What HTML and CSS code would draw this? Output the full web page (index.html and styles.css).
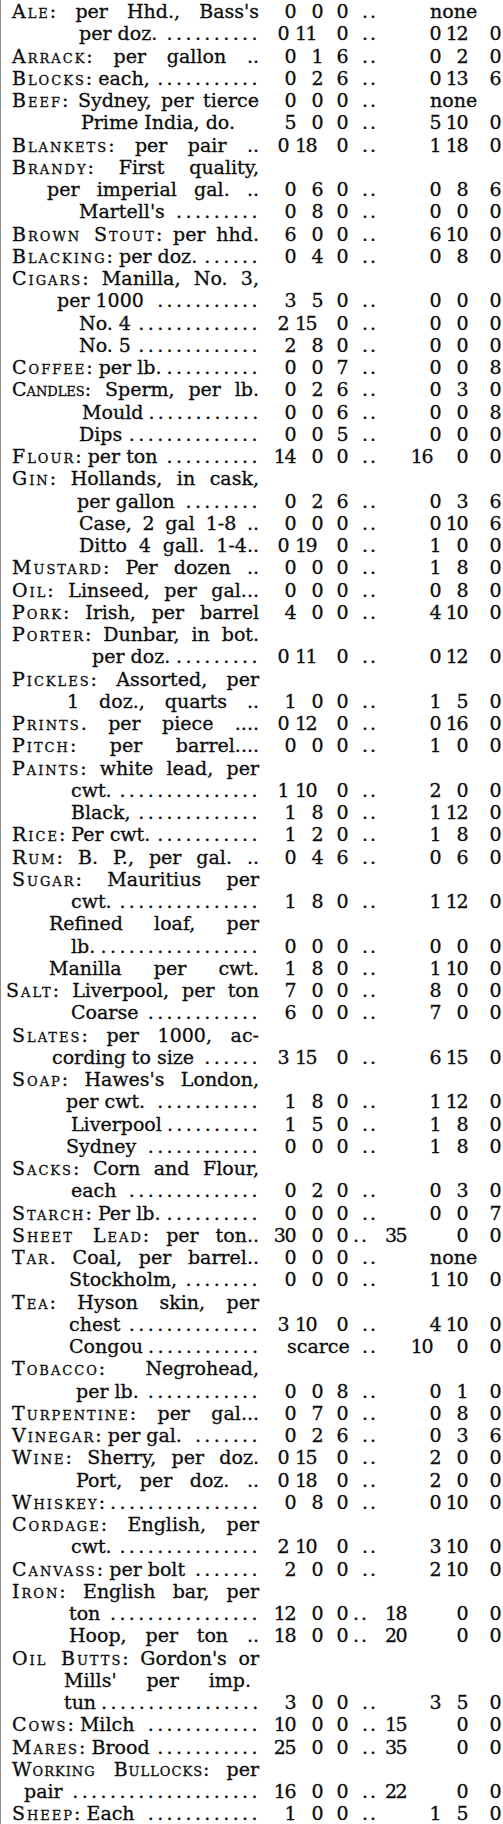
FILE: index.html
```html
<!DOCTYPE html>
<html lang="en">
<head>
<meta charset="utf-8">
<title>Prices Current</title>
<link rel="stylesheet" href="styles.css">
</head>
<body>
<div class="page">
<div class="r"><div class="d j"><span class="h">Ale</span>: per Hhd., Bass's</div><span class="lp">0</span><span class="ls">0</span><span class="ld">0</span><span class="dd">..</span><span class="no">none</span></div>
<div class="r w"><div class="d l i80"><span class="t">per doz.</span><span class="ldr">................................</span></div><span class="lp">0</span><span class="ls">11</span><span class="ld">0</span><span class="dd">..</span><span class="rp">0</span><span class="rs">12</span><span class="rd">0</span></div>
<div class="r"><div class="d j"><span class="h">Arrack</span>: per gallon ..</div><span class="lp">0</span><span class="ls">1</span><span class="ld">6</span><span class="dd">..</span><span class="rp">0</span><span class="rs">2</span><span class="rd">0</span></div>
<div class="r"><div class="d l"><span class="t"><span class="h">Blocks</span>: each,</span><span class="ldr">................................</span></div><span class="lp">0</span><span class="ls">2</span><span class="ld">6</span><span class="dd">..</span><span class="rp">0</span><span class="rs">13</span><span class="rd">6</span></div>
<div class="r"><div class="d j"><span class="h">Beef</span>: Sydney, per tierce</div><span class="lp">0</span><span class="ls">0</span><span class="ld">0</span><span class="dd">..</span><span class="no">none</span></div>
<div class="r"><div class="d i82">Prime India, do.</div><span class="lp">5</span><span class="ls">0</span><span class="ld">0</span><span class="dd">..</span><span class="rp">5</span><span class="rs">10</span><span class="rd">0</span></div>
<div class="r w"><div class="d j"><span class="h">Blankets</span>: per pair ..</div><span class="lp">0</span><span class="ls">18</span><span class="ld">0</span><span class="dd">..</span><span class="rp">1</span><span class="rs">18</span><span class="rd">0</span></div>
<div class="r"><div class="d j"><span class="h">Brandy</span>: First quality,</div></div>
<div class="r"><div class="d j i48">per imperial gal. ..</div><span class="lp">0</span><span class="ls">6</span><span class="ld">0</span><span class="dd">..</span><span class="rp">0</span><span class="rs">8</span><span class="rd">6</span></div>
<div class="r"><div class="d l i80"><span class="t">Martell's</span><span class="ldr">................................</span></div><span class="lp">0</span><span class="ls">8</span><span class="ld">0</span><span class="dd">..</span><span class="rp">0</span><span class="rs">0</span><span class="rd">0</span></div>
<div class="r"><div class="d j"><span class="h">Brown Stout</span>: per hhd.</div><span class="lp">6</span><span class="ls">0</span><span class="ld">0</span><span class="dd">..</span><span class="rp">6</span><span class="rs">10</span><span class="rd">0</span></div>
<div class="r"><div class="d l"><span class="t"><span class="h">Blacking</span>: per doz.</span><span class="ldr">................................</span></div><span class="lp">0</span><span class="ls">4</span><span class="ld">0</span><span class="dd">..</span><span class="rp">0</span><span class="rs">8</span><span class="rd">0</span></div>
<div class="r"><div class="d j"><span class="h">Cigars</span>: Manilla, No. 3,</div></div>
<div class="r"><div class="d l i58"><span class="t">per 1000</span><span class="ldr">................................</span></div><span class="lp">3</span><span class="ls">5</span><span class="ld">0</span><span class="dd">..</span><span class="rp">0</span><span class="rs">0</span><span class="rd">0</span></div>
<div class="r w"><div class="d l i80"><span class="t">No. 4</span><span class="ldr">................................</span></div><span class="lp">2</span><span class="ls">15</span><span class="ld">0</span><span class="dd">..</span><span class="rp">0</span><span class="rs">0</span><span class="rd">0</span></div>
<div class="r"><div class="d l i80"><span class="t">No. 5</span><span class="ldr">................................</span></div><span class="lp">2</span><span class="ls">8</span><span class="ld">0</span><span class="dd">..</span><span class="rp">0</span><span class="rs">0</span><span class="rd">0</span></div>
<div class="r"><div class="d l"><span class="t"><span class="h">Coffee</span>: per lb.</span><span class="ldr">................................</span></div><span class="lp">0</span><span class="ls">0</span><span class="ld">7</span><span class="dd">..</span><span class="rp">0</span><span class="rs">0</span><span class="rd">8</span></div>
<div class="r"><div class="d j t0"><span class="h">Candles</span>: Sperm, per lb.</div><span class="lp">0</span><span class="ls">2</span><span class="ld">6</span><span class="dd">..</span><span class="rp">0</span><span class="rs">3</span><span class="rd">0</span></div>
<div class="r"><div class="d l i83"><span class="t">Mould</span><span class="ldr">................................</span></div><span class="lp">0</span><span class="ls">0</span><span class="ld">6</span><span class="dd">..</span><span class="rp">0</span><span class="rs">0</span><span class="rd">8</span></div>
<div class="r"><div class="d l i80"><span class="t">Dips</span><span class="ldr">................................</span></div><span class="lp">0</span><span class="ls">0</span><span class="ld">5</span><span class="dd">..</span><span class="rp">0</span><span class="rs">0</span><span class="rd">0</span></div>
<div class="r r2"><div class="d l"><span class="t"><span class="h">Flour</span>: per ton</span><span class="ldr">................................</span></div><span class="lp">14</span><span class="ls">0</span><span class="ld">0</span><span class="dd">..</span><span class="rp">16</span><span class="rs">0</span><span class="rd">0</span></div>
<div class="r"><div class="d j"><span class="h">Gin</span>: Hollands, in cask,</div></div>
<div class="r"><div class="d l i78"><span class="t">per gallon</span><span class="ldr">................................</span></div><span class="lp">0</span><span class="ls">2</span><span class="ld">6</span><span class="dd">..</span><span class="rp">0</span><span class="rs">3</span><span class="rd">6</span></div>
<div class="r"><div class="d j i80">Case, 2 gal 1-8 ..</div><span class="lp">0</span><span class="ls">0</span><span class="ld">0</span><span class="dd">..</span><span class="rp">0</span><span class="rs">10</span><span class="rd">6</span></div>
<div class="r w"><div class="d j i80">Ditto 4 gall. 1-4..</div><span class="lp">0</span><span class="ls">19</span><span class="ld">0</span><span class="dd">..</span><span class="rp">1</span><span class="rs">0</span><span class="rd">0</span></div>
<div class="r"><div class="d j"><span class="h">Mustard</span>: Per dozen ..</div><span class="lp">0</span><span class="ls">0</span><span class="ld">0</span><span class="dd">..</span><span class="rp">1</span><span class="rs">8</span><span class="rd">0</span></div>
<div class="r"><div class="d j"><span class="h">Oil</span>: Linseed, per gal...</div><span class="lp">0</span><span class="ls">0</span><span class="ld">0</span><span class="dd">..</span><span class="rp">0</span><span class="rs">8</span><span class="rd">0</span></div>
<div class="r"><div class="d j"><span class="h">Pork</span>: Irish, per barrel</div><span class="lp">4</span><span class="ls">0</span><span class="ld">0</span><span class="dd">..</span><span class="rp">4</span><span class="rs">10</span><span class="rd">0</span></div>
<div class="r"><div class="d j"><span class="h">Porter</span>: Dunbar, in bot.</div></div>
<div class="r w"><div class="d l i93"><span class="t">per doz.</span><span class="ldr">................................</span></div><span class="lp">0</span><span class="ls">11</span><span class="ld">0</span><span class="dd">..</span><span class="rp">0</span><span class="rs">12</span><span class="rd">0</span></div>
<div class="r"><div class="d j"><span class="h">Pickles</span>: Assorted, per</div></div>
<div class="r"><div class="d j i68">1 doz., quarts ..</div><span class="lp">1</span><span class="ls">0</span><span class="ld">0</span><span class="dd">..</span><span class="rp">1</span><span class="rs">5</span><span class="rd">0</span></div>
<div class="r w"><div class="d j"><span class="h">Prints</span>. per piece ....</div><span class="lp">0</span><span class="ls">12</span><span class="ld">0</span><span class="dd">..</span><span class="rp">0</span><span class="rs">16</span><span class="rd">0</span></div>
<div class="r"><div class="d j"><span class="h">Pitch</span>: per barrel....</div><span class="lp">0</span><span class="ls">0</span><span class="ld">0</span><span class="dd">..</span><span class="rp">1</span><span class="rs">0</span><span class="rd">0</span></div>
<div class="r"><div class="d j"><span class="h">Paints</span>: white lead, per</div></div>
<div class="r w"><div class="d l i72"><span class="t">cwt.</span><span class="ldr">................................</span></div><span class="lp">1</span><span class="ls">10</span><span class="ld">0</span><span class="dd">..</span><span class="rp">2</span><span class="rs">0</span><span class="rd">0</span></div>
<div class="r"><div class="d l i72"><span class="t">Black,</span><span class="ldr">................................</span></div><span class="lp">1</span><span class="ls">8</span><span class="ld">0</span><span class="dd">..</span><span class="rp">1</span><span class="rs">12</span><span class="rd">0</span></div>
<div class="r"><div class="d l"><span class="t"><span class="h">Rice</span>: Per cwt.</span><span class="ldr">................................</span></div><span class="lp">1</span><span class="ls">2</span><span class="ld">0</span><span class="dd">..</span><span class="rp">1</span><span class="rs">8</span><span class="rd">0</span></div>
<div class="r"><div class="d j"><span class="h">Rum</span>: B. P., per gal. ..</div><span class="lp">0</span><span class="ls">4</span><span class="ld">6</span><span class="dd">..</span><span class="rp">0</span><span class="rs">6</span><span class="rd">0</span></div>
<div class="r"><div class="d j"><span class="h">Sugar</span>: Mauritius per</div></div>
<div class="r"><div class="d l i72"><span class="t">cwt.</span><span class="ldr">................................</span></div><span class="lp">1</span><span class="ls">8</span><span class="ld">0</span><span class="dd">..</span><span class="rp">1</span><span class="rs">12</span><span class="rd">0</span></div>
<div class="r"><div class="d j i50">Refined loaf, per</div></div>
<div class="r"><div class="d l i72"><span class="t">lb.</span><span class="ldr">................................</span></div><span class="lp">0</span><span class="ls">0</span><span class="ld">0</span><span class="dd">..</span><span class="rp">0</span><span class="rs">0</span><span class="rd">0</span></div>
<div class="r"><div class="d j i50">Manilla per cwt.</div><span class="lp">1</span><span class="ls">8</span><span class="ld">0</span><span class="dd">..</span><span class="rp">1</span><span class="rs">10</span><span class="rd">0</span></div>
<div class="r"><div class="d j i7"><span class="h">Salt</span>: Liverpool, per ton</div><span class="lp">7</span><span class="ls">0</span><span class="ld">0</span><span class="dd">..</span><span class="rp">8</span><span class="rs">0</span><span class="rd">0</span></div>
<div class="r"><div class="d l i72"><span class="t">Coarse</span><span class="ldr">................................</span></div><span class="lp">6</span><span class="ls">0</span><span class="ld">0</span><span class="dd">..</span><span class="rp">7</span><span class="rs">0</span><span class="rd">0</span></div>
<div class="r"><div class="d j"><span class="h">Slates</span>: per 1000, ac-</div></div>
<div class="r w"><div class="d l i53"><span class="t">cording to size</span><span class="ldr">................................</span></div><span class="lp">3</span><span class="ls">15</span><span class="ld">0</span><span class="dd">..</span><span class="rp">6</span><span class="rs">15</span><span class="rd">0</span></div>
<div class="r"><div class="d j"><span class="h">Soap</span>: Hawes's London,</div></div>
<div class="r"><div class="d l i67"><span class="t">per cwt.</span><span class="ldr">................................</span></div><span class="lp">1</span><span class="ls">8</span><span class="ld">0</span><span class="dd">..</span><span class="rp">1</span><span class="rs">12</span><span class="rd">0</span></div>
<div class="r"><div class="d l i72"><span class="t">Liverpool</span><span class="ldr">................................</span></div><span class="lp">1</span><span class="ls">5</span><span class="ld">0</span><span class="dd">..</span><span class="rp">1</span><span class="rs">8</span><span class="rd">0</span></div>
<div class="r"><div class="d l i67"><span class="t">Sydney</span><span class="ldr">................................</span></div><span class="lp">0</span><span class="ls">0</span><span class="ld">0</span><span class="dd">..</span><span class="rp">1</span><span class="rs">8</span><span class="rd">0</span></div>
<div class="r"><div class="d j"><span class="h">Sacks</span>: Corn and Flour,</div></div>
<div class="r"><div class="d l i72"><span class="t">each</span><span class="ldr">................................</span></div><span class="lp">0</span><span class="ls">2</span><span class="ld">0</span><span class="dd">..</span><span class="rp">0</span><span class="rs">3</span><span class="rd">0</span></div>
<div class="r"><div class="d l"><span class="t"><span class="h">Starch</span>: Per lb.</span><span class="ldr">................................</span></div><span class="lp">0</span><span class="ls">0</span><span class="ld">0</span><span class="dd">..</span><span class="rp">0</span><span class="rs">0</span><span class="rd">7</span></div>
<div class="r n1"><div class="d j"><span class="h">Sheet Lead</span>: per ton..</div><span class="lp">30</span><span class="ls">0</span><span class="ld">0</span><span class="dd">..</span><span class="rp">35</span><span class="rs">0</span><span class="rd">0</span></div>
<div class="r"><div class="d j"><span class="h">Tar</span>. Coal, per barrel..</div><span class="lp">0</span><span class="ls">0</span><span class="ld">0</span><span class="dd">..</span><span class="no">none</span></div>
<div class="r"><div class="d l i70"><span class="t">Stockholm,</span><span class="ldr">................................</span></div><span class="lp">0</span><span class="ls">0</span><span class="ld">0</span><span class="dd">..</span><span class="rp">1</span><span class="rs">10</span><span class="rd">0</span></div>
<div class="r"><div class="d j"><span class="h">Tea</span>: Hyson skin, per</div></div>
<div class="r w"><div class="d l i70"><span class="t">chest</span><span class="ldr">................................</span></div><span class="lp">3</span><span class="ls">10</span><span class="ld">0</span><span class="dd">..</span><span class="rp">4</span><span class="rs">10</span><span class="rd">0</span></div>
<div class="r r2"><div class="d l i70"><span class="t">Congou</span><span class="ldr">................................</span></div><span class="sca">scarce</span><span class="dd">..</span><span class="rp">10</span><span class="rs">0</span><span class="rd">0</span></div>
<div class="r"><div class="d j"><span class="h">Tobacco</span>: Negrohead,</div></div>
<div class="r"><div class="d l i77"><span class="t">per lb.</span><span class="ldr">................................</span></div><span class="lp">0</span><span class="ls">0</span><span class="ld">8</span><span class="dd">..</span><span class="rp">0</span><span class="rs">1</span><span class="rd">0</span></div>
<div class="r"><div class="d j"><span class="h">Turpentine</span>: per gal...</div><span class="lp">0</span><span class="ls">7</span><span class="ld">0</span><span class="dd">..</span><span class="rp">0</span><span class="rs">8</span><span class="rd">0</span></div>
<div class="r"><div class="d l"><span class="t"><span class="h">Vinegar</span>: per gal.</span><span class="ldr">................................</span></div><span class="lp">0</span><span class="ls">2</span><span class="ld">6</span><span class="dd">..</span><span class="rp">0</span><span class="rs">3</span><span class="rd">6</span></div>
<div class="r w"><div class="d j"><span class="h">Wine</span>: Sherry, per doz.</div><span class="lp">0</span><span class="ls">15</span><span class="ld">0</span><span class="dd">..</span><span class="rp">2</span><span class="rs">0</span><span class="rd">0</span></div>
<div class="r w"><div class="d j i77">Port, per doz. ..</div><span class="lp">0</span><span class="ls">18</span><span class="ld">0</span><span class="dd">..</span><span class="rp">2</span><span class="rs">0</span><span class="rd">0</span></div>
<div class="r"><div class="d l"><span class="t"><span class="h">Whiskey</span>:</span><span class="ldr">................................</span></div><span class="lp">0</span><span class="ls">8</span><span class="ld">0</span><span class="dd">..</span><span class="rp">0</span><span class="rs">10</span><span class="rd">0</span></div>
<div class="r"><div class="d j"><span class="h">Cordage</span>: English, per</div></div>
<div class="r w"><div class="d l i72"><span class="t">cwt.</span><span class="ldr">................................</span></div><span class="lp">2</span><span class="ls">10</span><span class="ld">0</span><span class="dd">..</span><span class="rp">3</span><span class="rs">10</span><span class="rd">0</span></div>
<div class="r"><div class="d l"><span class="t"><span class="h">Canvass</span>: per bolt</span><span class="ldr">................................</span></div><span class="lp">2</span><span class="ls">0</span><span class="ld">0</span><span class="dd">..</span><span class="rp">2</span><span class="rs">10</span><span class="rd">0</span></div>
<div class="r"><div class="d j"><span class="h">Iron</span>: English bar, per</div></div>
<div class="r n1"><div class="d l i70"><span class="t">ton</span><span class="ldr">................................</span></div><span class="lp">12</span><span class="ls">0</span><span class="ld">0</span><span class="dd">..</span><span class="rp">18</span><span class="rs">0</span><span class="rd">0</span></div>
<div class="r n1"><div class="d j i70">Hoop, per ton ..</div><span class="lp">18</span><span class="ls">0</span><span class="ld">0</span><span class="dd">..</span><span class="rp">20</span><span class="rs">0</span><span class="rd">0</span></div>
<div class="r"><div class="d j"><span class="h">Oil Butts</span>: Gordon's or</div></div>
<div class="r"><div class="d j i65 pr">Mills' per imp.</div></div>
<div class="r"><div class="d l i65"><span class="t">tun</span><span class="ldr">................................</span></div><span class="lp">3</span><span class="ls">0</span><span class="ld">0</span><span class="dd">..</span><span class="rp">3</span><span class="rs">5</span><span class="rd">0</span></div>
<div class="r n2"><div class="d l"><span class="t"><span class="h">Cows</span>: Milch</span><span class="ldr">................................</span></div><span class="lp">10</span><span class="ls">0</span><span class="ld">0</span><span class="dd">..</span><span class="rp">15</span><span class="rs">0</span><span class="rd">0</span></div>
<div class="r n2"><div class="d l"><span class="t"><span class="h">Mares</span>: Brood</span><span class="ldr">................................</span></div><span class="lp">25</span><span class="ls">0</span><span class="ld">0</span><span class="dd">..</span><span class="rp">35</span><span class="rs">0</span><span class="rd">0</span></div>
<div class="r"><div class="d j t1"><span class="h">Working Bullocks</span>: per</div></div>
<div class="r n2"><div class="d l i25"><span class="t">pair</span><span class="ldr">................................</span></div><span class="lp">16</span><span class="ls">0</span><span class="ld">0</span><span class="dd">..</span><span class="rp">22</span><span class="rs">0</span><span class="rd">0</span></div>
<div class="r"><div class="d l"><span class="t"><span class="h">Sheep</span>: Each</span><span class="ldr">................................</span></div><span class="lp">1</span><span class="ls">0</span><span class="ld">0</span><span class="dd">..</span><span class="rp">1</span><span class="rs">5</span><span class="rd">0</span></div>
</div>
<script src="script.js"></script>
</body>
</html>
```
FILE: styles.css
```css
html, body {
  margin: 0;
  padding: 0;
  background: #ffffff;
}

body {
  font-family: "DejaVu Serif", serif;
  font-size: 19px;
  line-height: 22.25px;
  color: #0c0c0c;
  -webkit-text-stroke: 0.3px #0c0c0c;
}

.page {
  width: 503px;
  box-shadow: inset 1px 0 0 #8c8c8c;
}

.r {
  display: grid;
  grid-template-columns: 259px 36px 27px 25px 38px 55px 27px 33px;
  height: 22.25px;
}

.d {
  grid-column: 1;
  padding-left: 12px;
  min-width: 0;
}

.j {
  text-align: justify;
  text-align-last: justify;
}

.pr {
  padding-right: 8px;
}

.l {
  display: flex;
  white-space: nowrap;
}

.t {
  flex: none;
}

.ldr {
  flex: 1;
  min-width: 0;
  overflow: hidden;
  text-align: right;
  letter-spacing: 3.4px;
  margin-left: 5px;
  margin-right: -2px;
}

.h {
  font-variant: small-caps;
  letter-spacing: 2px;
}

.t0 .h { letter-spacing: 0; }
.t1 .h { letter-spacing: 1px; }

.lp, .ls, .ld, .rp, .rs, .rd {
  text-align: right;
  letter-spacing: -1.5px;
  white-space: nowrap;
}

.lp { grid-column: 2; }
.ls { grid-column: 3; }
.ld { grid-column: 4; }
.dd {
  grid-column: 5;
  padding-left: 15px;
  letter-spacing: 2px;
}
.rp { grid-column: 6; }
.rs { grid-column: 7; }
.rd { grid-column: 8; }

.no {
  grid-column: 6 / 9;
  padding-left: 45px;
}

.sca {
  grid-column: 2 / 5;
  padding-left: 28px;
}

.w .lp { padding-right: 7px; }
.w .ls { padding-right: 7px; }

.r2 .rp { padding-right: 8px; }

.n1 .dd { padding-left: 6px; }
.n1 .rp { padding-right: 45px; }
.n2 .rp { padding-right: 37px; }

.i7 { padding-left: 6px; }
.i25 { padding-left: 24px; }
.i48 { padding-left: 47px; }
.i50 { padding-left: 49px; }
.i53 { padding-left: 52px; }
.i58 { padding-left: 57px; }
.i65 { padding-left: 64px; }
.i67 { padding-left: 66px; }
.i68 { padding-left: 67px; }
.i70 { padding-left: 69px; }
.i72 { padding-left: 71px; }
.i77 { padding-left: 76px; }
.i78 { padding-left: 77px; }
.i80 { padding-left: 79px; }
.i82 { padding-left: 81px; }
.i83 { padding-left: 82px; }
.i93 { padding-left: 92px; }
```
FILE: script.js
```js
(function () {
  var leaders = document.querySelectorAll('.ldr');
  for (var i = 0; i < leaders.length; i++) {
    var el = leaders[i];
    var dots = el.textContent;
    while (dots.length > 0 && el.scrollWidth > el.clientWidth) {
      dots = dots.slice(1);
      el.textContent = dots;
    }
  }
})();
```
